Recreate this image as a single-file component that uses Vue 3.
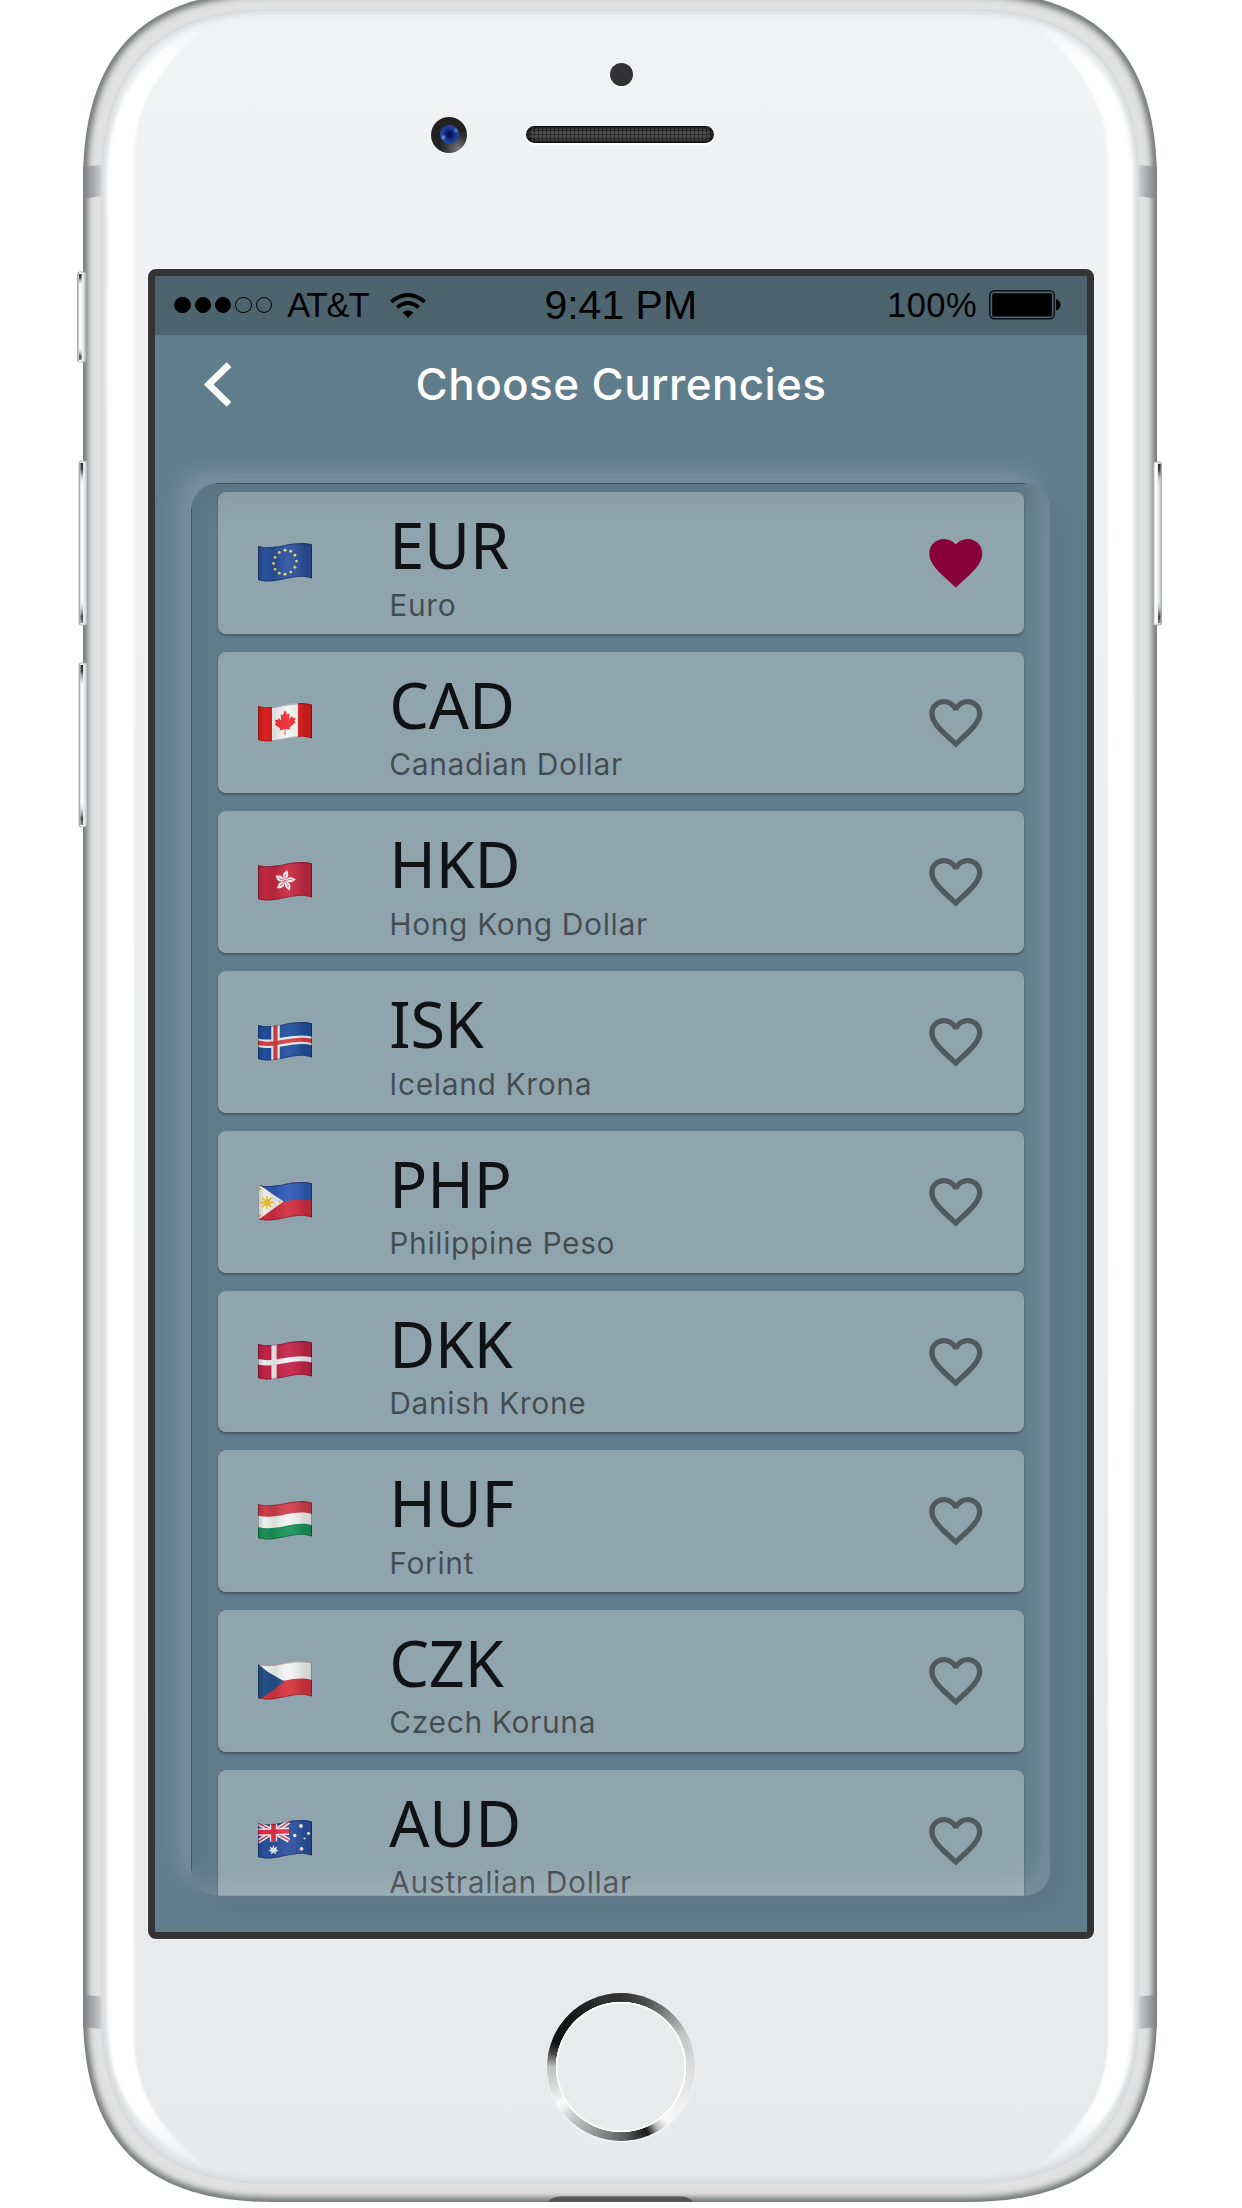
<script setup>
const currencies = [
  { code: 'EUR', name: 'Euro', favorite: true },
  { code: 'CAD', name: 'Canadian Dollar' },
  { code: 'HKD', name: 'Hong Kong Dollar' },
  { code: 'ISK', name: 'Iceland Krona' },
  { code: 'PHP', name: 'Philippine Peso' },
  { code: 'DKK', name: 'Danish Krone' },
  { code: 'HUF', name: 'Forint' },
  { code: 'CZK', name: 'Czech Koruna' },
  { code: 'AUD', name: 'Australian Dollar' },
]

// Rounded body outline with continuous-curvature corners.
function outline(x0, y0, x1, y1, r, c) {
  return `M${x0} ${y0 + r}C${x0} ${y0 + c} ${x0 + c} ${y0} ${x0 + r} ${y0}H${x1 - r}` +
    `C${x1 - c} ${y0} ${x1} ${y0 + c} ${x1} ${y0 + r}V${y1 - r}` +
    `C${x1} ${y1 - c} ${x1 - c} ${y1} ${x1 - r} ${y1}H${x0 + r}` +
    `C${x0 + c} ${y1} ${x0} ${y1 - c} ${x0} ${y1 - r}Z`
}
const body = outline(83, -9, 1157, 2202, 190, 61)
const face = outline(101, 9, 1139, 2184, 172, 57)

const buttons = [
  { x: 77.5, y: 272, h: 90, dark: 79 },
  { x: 79, y: 461, h: 164, dark: 80.5 },
  { x: 79, y: 663, h: 164, dark: 80.5 },
  { x: 1153, y: 462, h: 163, dark: 1158 },
]

const flagShape = 'M0 3C9 5.5 17 4 27 2S45-.8 54 1.6V35.4C45 32.5 37 33.6 27 36S8 39.6 0 37Z'
const euStars = Array.from({ length: 12 }, (_, i) => {
  const a = (i * Math.PI) / 6
  return { x: 27 + 11.5 * Math.sin(a), y: 19.3 - 12 * Math.cos(a) - 1.2 * Math.sin(a) }
})
const petals = [0, 72, 144, 216, 288]
const rays = [0, 45, 90, 135]
</script>

<template>
  <div class="stage">
    <svg class="phone" viewBox="0 0 1242 2208" width="1242" height="2208">
      <defs>
        <clipPath id="bodyClip"><path :d="body" /></clipPath>
        <clipPath id="faceClip"><path :d="face" /></clipPath>
        <linearGradient id="faceFill" x1="0" y1="0" x2="0" y2="1">
          <stop offset="0" stop-color="#f1f2f4" />
          <stop offset="1" stop-color="#e8e9eb" />
        </linearGradient>
        <linearGradient id="bandL">
          <stop offset="0" stop-color="#7b7e82" />
          <stop offset="1" stop-color="#cccdce" />
        </linearGradient>
        <linearGradient id="bandR">
          <stop offset="0" stop-color="#cccdce" />
          <stop offset="1" stop-color="#7b7e82" />
        </linearGradient>
        <linearGradient id="btnFill">
          <stop offset="0" stop-color="#9a9b9d" />
          <stop offset=".25" stop-color="#fff" />
          <stop offset=".5" stop-color="#f4f5f7" />
          <stop offset=".75" stop-color="#dcdde0" />
          <stop offset="1" stop-color="#b2b3b5" />
        </linearGradient>
        <linearGradient id="capFill" x1="0" y1="0" x2="0" y2="1">
          <stop offset="0" stop-color="#2c2c2c" />
          <stop offset=".04" stop-color="#444" />
          <stop offset=".14" stop-color="#fff" stop-opacity="0" />
          <stop offset=".85" stop-color="#fff" stop-opacity="0" />
          <stop offset=".96" stop-color="#444" />
          <stop offset="1" stop-color="#888" />
        </linearGradient>
        <linearGradient id="glowTop" gradientUnits="userSpaceOnUse" x1="0" y1="18" x2="0" y2="70">
          <stop offset="0" stop-color="#fff" stop-opacity=".1" />
          <stop offset="1" stop-color="#fff" />
        </linearGradient>
        <linearGradient id="glowBottom" gradientUnits="userSpaceOnUse" x1="0" y1="2110" x2="0" y2="2160">
          <stop offset="0" stop-color="#fff" />
          <stop offset="1" stop-color="#fff" stop-opacity=".3" />
        </linearGradient>
        <filter id="soft1" x="-5%" y="-5%" width="110%" height="110%"><feGaussianBlur stdDeviation="1" /></filter>
        <filter id="soft3" x="-5%" y="-5%" width="110%" height="110%"><feGaussianBlur stdDeviation="3.2" /></filter>
      </defs>

      <g clip-path="url(#bodyClip)">
        <path :d="body" fill="#e1e1e1" />
        <path :d="body" fill="none" stroke="#6b6e6d" stroke-width="9" filter="url(#soft3)" />
        <path d="M83 167L101 165V196L83 199Z" fill="url(#bandL)" />
        <path d="M1139 165L1157 167V199L1139 196Z" fill="url(#bandR)" />
        <path d="M83 1995L101 1996.5V2029L83 2027Z" fill="url(#bandL)" />
        <path d="M1139 1996.5L1157 1995V2027L1139 2029Z" fill="url(#bandR)" />
        <path d="M547 2203C551 2198 555 2196.500 562 2196.500H680C687 2196.500 690 2198 694 2203Z" fill="#555" />
      </g>
      <g clip-path="url(#faceClip)">
        <path :d="face" fill="url(#faceFill)" />
        <g filter="url(#soft1)">
          <path d="M107 1100V175C107 105 142 50 215 16C165 62 134 100 134 160V1100Z" fill="url(#glowTop)" />
          <path d="M107 1099V2025C107 2090 142 2140 205 2168C165 2130 134 2100 134 2035V1099Z" fill="url(#glowBottom)" />
          <path d="M1135 1100V175C1135 105 1100 50 1027 16C1077 62 1108 100 1108 160V1100Z" fill="url(#glowTop)" />
          <path d="M1135 1099V2025C1135 2090 1100 2140 1037 2168C1077 2130 1108 2100 1108 2035V1099Z" fill="url(#glowBottom)" />
        </g>
        <path :d="face" fill="none" stroke="#d6d8db" stroke-width="8" filter="url(#soft3)" />
        <path :d="face" fill="none" stroke="#d6d8da" stroke-width="2" />
      </g>

      <g v-for="(b, i) in buttons" :key="i">
        <rect :x="b.x" :y="b.y" width="8.500" :height="b.h" rx="2" fill="url(#btnFill)" stroke="#a4a5a7" stroke-width=".8" />
        <rect :x="b.dark" :y="b.y + 2" width="2.600" :height="b.h - 4" fill="url(#capFill)" />
      </g>
    </svg>

    <header class="top-glass">
      <span class="sensor"></span>
      <div class="ear">
        <span class="camera"><span class="lens"></span></span>
        <span class="speaker"></span>
      </div>
    </header>

    <main class="screen">
      <div class="status">
        <div class="carrier">
          <i class="dot on"></i><i class="dot on"></i><i class="dot on"></i><i class="dot"></i><i class="dot"></i>
          <span class="net">AT&amp;T</span>
          <svg class="wifi" viewBox="0 0 36 25" width="36" height="25">
            <g fill="none" stroke="#000" stroke-width="3.900">
              <path d="M1.400 8.800Q18-4.800 34.600 8.800" />
              <path d="M7.300 14.400Q18 5.800 28.700 14.400" />
            </g>
            <path d="M12.500 19.400Q18 15.400 23.500 19.400L18 25Z" />
          </svg>
        </div>
        <span class="time">9:41 PM</span>
        <div class="power">
          <span class="pct">100%</span>
          <svg viewBox="0 0 72 30" width="72" height="30">
            <rect x=".8" y=".8" width="64.500" height="28" rx="4.500" fill="none" stroke="#0b1216" stroke-width="1.500" />
            <rect x="3.200" y="3.200" width="59.700" height="23.200" rx="1.500" />
            <path d="M67 9Q71.500 10.500 71.500 14.800T67 20.600Z" />
          </svg>
        </div>
      </div>

      <div class="appbar">
        <svg class="back" viewBox="0 0 28 45" width="28" height="45">
          <path d="M25 2.600L4.600 22.500L25 42.400" fill="none" stroke="#fff" stroke-width="6.800" />
        </svg>
        <h1>Choose Currencies</h1>
      </div>

      <section class="panel">
        <ul class="list">
          <li v-for="c in currencies" :key="c.code" class="card">
            <svg class="flag" viewBox="0 0 54 39" width="54" height="39">
              <defs>
                <clipPath :id="'wave' + c.code"><path :d="flagShape" /></clipPath>
                <linearGradient :id="'sheen' + c.code">
                  <stop offset="0" stop-opacity=".2" />
                  <stop offset=".12" stop-opacity=".02" />
                  <stop offset=".3" stop-opacity=".1" />
                  <stop offset=".55" stop-color="#fff" stop-opacity=".06" />
                  <stop offset=".85" stop-opacity=".12" />
                  <stop offset=".97" stop-opacity=".14" />
                  <stop offset="1" stop-opacity=".35" />
                </linearGradient>
              </defs>
              <g :clip-path="`url(#wave${c.code})`">
                <template v-if="c.code === 'EUR'">
                  <rect width="54" height="40" fill="#2c539f" />
                  <circle v-for="(s, i) in euStars" :key="i" :cx="s.x" :cy="s.y" r="1.450" fill="#ecd257" />
                </template>
                <template v-else-if="c.code === 'CAD'">
                  <rect width="54" height="40" fill="#f3f4f4" />
                  <rect width="14" height="40" fill="#e02020" />
                  <rect x="40" width="14" height="40" fill="#e02020" />
                  <path d="M27 7L29.300 11.500L31.600 10.200L31 16L34 13L34.800 15L37.500 14.400L36.500 18L37.500 19.300L31.500 24.500L32 26.500L27.400 26V32H26.600V26.300L21.500 27.500L22.300 25.500L16.800 21.500L18 20.300L17 16.800L19.800 17L20.500 15L23.300 17.600L22.500 11.600L24.800 12Z" fill="#ef2f34" />
                </template>
                <template v-else-if="c.code === 'HKD'">
                  <rect width="54" height="40" fill="#c62a41" />
                  <g transform="translate(27 18.800)">
                    <g v-for="p in petals" :key="p" :transform="`rotate(${p + 8})`">
                      <path d="M0-.5C-3.600-3-4-8 1.200-11C.4-8.500 3.800-7.500 2-3.800C1.600-2.300 .6-2 0-.5Z" fill="#f6eef0" />
                      <path d="M0-2Q-1.500-5 .3-7" fill="none" stroke="#c62a41" stroke-width=".7" />
                    </g>
                  </g>
                </template>
                <template v-else-if="c.code === 'ISK'">
                  <rect width="54" height="40" fill="#22509f" />
                  <g fill="none" stroke="#eef0f2" stroke-width="8.500">
                    <path d="M17.500 0V40M-1 20.500C9 23 17 21.500 27 19.500S45 16.700 55 19" />
                  </g>
                  <g fill="none" stroke="#d94048" stroke-width="4.200">
                    <path d="M17.500 0V40M-1 20.500C9 23 17 21.500 27 19.500S45 16.700 55 19" />
                  </g>
                </template>
                <template v-else-if="c.code === 'PHP'">
                  <rect width="54" height="40" fill="#d22f42" />
                  <path d="M0 0H54V18.500C45 16 36 17.500 27 19.500S9 22.500 0 20.500Z" fill="#2f5cb8" />
                  <path d="M0 2L25.500 19.500L0 38Z" fill="#f3f3ef" />
                  <circle cx="8.800" cy="20.500" r="3.600" fill="#eec230" />
                  <path v-for="r in rays" :key="r" d="M8.800 14V27" :transform="`rotate(${r} 8.800 20.500)`" stroke="#eec230" stroke-width="1.500" />
                  <g fill="#eec230">
                    <circle cx="2" cy="7" r="1.200" /><circle cx="2" cy="33.500" r="1.200" /><circle cx="21.500" cy="19.800" r="1.200" />
                  </g>
                </template>
                <template v-else-if="c.code === 'DKK'">
                  <rect width="54" height="40" fill="#c52549" />
                  <path d="M16 0V40M-1 20.500C9 23 17 21.500 27 19.500S45 16.700 55 19" fill="none" stroke="#f3f3f4" stroke-width="5.200" />
                </template>
                <template v-else-if="c.code === 'HUF'">
                  <rect width="54" height="40" fill="#1c945a" />
                  <path d="M0 0H54V24.300C45 21.500 36 23 27 25S9 28.500 0 26Z" fill="#f3f4f4" />
                  <path d="M0 0H54V13C45 10.300 36 11.500 27 13.500S9 17 0 14.500Z" fill="#d23f4e" />
                </template>
                <template v-else-if="c.code === 'CZK'">
                  <rect width="54" height="40" fill="#d8343e" />
                  <path d="M0 0H54V19C45 16.200 36 17.500 27 19.500L0 22Z" fill="#f3f4f4" />
                  <path d="M0 3L10 11L26.500 20.500L10 33L0 39Z" fill="#265289" />
                </template>
                <template v-else>
                  <rect width="54" height="40" fill="#2c52a0" />
                  <g transform="skewY(-2)">
                    <path d="M0 3L31 21.500M0 21.500L31 3" stroke="#f1eef2" stroke-width="4.600" />
                    <path d="M0 3L31 21.500M0 21.500L31 3" stroke="#e0364e" stroke-width="1.500" />
                    <path d="M15.500 0V22M0 12.300H31" stroke="#f1eef2" stroke-width="7.400" />
                    <path d="M15.500 0V22M0 12.300H31" stroke="#e8304b" stroke-width="4.600" />
                  </g>
                  <g fill="#f3f4f8">
                    <path d="M15.500 24.800L16.600 27.900L19.500 26.400L18.300 29.300L20.600 31L17.700 31.500L17.800 34.500L15.500 32.500L13.200 34.500L13.300 31.500L10.400 31L12.700 29.300L11.500 26.400L14.400 27.900Z" />
                    <circle cx="43" cy="6" r="1.900" /><circle cx="36.800" cy="15.500" r="1.700" />
                    <circle cx="50.500" cy="13.300" r="1.600" /><circle cx="46.500" cy="18.500" r="1.100" /><circle cx="43.500" cy="28.800" r="1.900" />
                  </g>
                </template>
                <rect width="54" height="40" :fill="`url(#sheen${c.code})`" />
                <path :d="flagShape" fill="none" stroke="#000" stroke-opacity=".25" stroke-width="1.800" />
              </g>
            </svg>
            <div class="label">
              <div class="code">{{ c.code }}</div>
              <div class="name">{{ c.name }}</div>
            </div>
            <svg class="heart" :class="{ on: c.favorite }" viewBox="0 0 24 24" width="63.600" height="63.600">
              <path v-if="c.favorite" d="M12 21.350l-1.450-1.320C5.400 15.360 2 12.280 2 8.500 2 5.420 4.420 3 7.500 3c1.740 0 3.410.81 4.500 2.090C13.090 3.810 14.760 3 16.500 3 19.580 3 22 5.420 22 8.500c0 3.780-3.400 6.860-8.550 11.540L12 21.350z" />
              <path v-else d="M16.500 3c-1.740 0-3.410.81-4.500 2.090C10.910 3.810 9.240 3 7.500 3 4.420 3 2 5.420 2 8.500c0 3.780 3.400 6.860 8.550 11.540L12 21.350l1.450-1.320C18.600 15.360 22 12.280 22 8.500 22 5.420 19.580 3 16.500 3zm-4.400 15.550l-.1.100-.1-.1C7.140 14.240 4 11.390 4 8.500 4 6.500 5.500 5 7.500 5c1.540 0 3.040.99 3.570 2.360h1.870C13.460 5.990 14.960 5 16.500 5c2 0 3.500 1.500 3.500 3.500 0 2.890-3.140 5.740-7.900 10.050z" />
            </svg>
          </li>
        </ul>
      </section>
    </main>

    <footer class="chin">
      <span class="home"></span>
    </footer>
  </div>
</template>

<style>
body {
  background: #fff;
}
</style>

<style scoped>
.stage {
  position: relative;
  box-sizing: border-box;
  width: 1242px;
  height: 2208px;
  overflow: hidden;
  display: flex;
  flex-direction: column;
  align-items: center;
  font-family: Inter, sans-serif;
}
.phone {
  position: absolute;
  inset: 0;
}
.top-glass {
  position: relative;
  width: 946px;
  height: 268.5px;
  flex: none;
  display: flex;
  flex-direction: column;
  align-items: center;
}
.sensor {
  margin-top: 63px;
  width: 23px;
  height: 23px;
  border-radius: 50%;
  background: #323234;
  box-shadow: 0 1px 1px #fff;
}
.ear {
  align-self: stretch;
  display: flex;
  align-items: center;
  gap: 58.5px;
  margin-top: 30.5px;
  padding-left: 283px;
}
.camera {
  width: 36px;
  height: 36px;
  border-radius: 50%;
  background: radial-gradient(circle at 75% 88%, #777 0, #3a3a3a 28%, #222 45%);
  display: flex;
  align-items: center;
  justify-content: center;
  box-shadow: 0 1px 1px #fff;
}
.lens {
  width: 19px;
  height: 19px;
  border-radius: 50%;
  background:
    radial-gradient(circle at 18% 65%, #7ba0dc 0, transparent 16%),
    radial-gradient(circle at 85% 28%, #4d86d8 0, transparent 15%),
    radial-gradient(circle, #04104d 10%, #17308a 40%, #2c4eaa 75%);
}
.speaker {
  width: 188px;
  height: 16.5px;
  border-radius: 9px;
  background:
    repeating-linear-gradient(90deg, rgba(0, 0, 0, .35) 0 1.5px, transparent 1.5px 4px),
    repeating-linear-gradient(0deg, #303030 0 1.5px, #505050 1.5px 4px);
  box-shadow: inset 0 0 4px 2px #0a0a0a, 0 2px 1px #fff;
}
.screen {
  position: relative;
  box-sizing: border-box;
  flex: none;
  width: 946.5px;
  height: 1670.5px;
  border: 7px solid #343434;
  border-radius: 8px;
  background: #607d8b;
  display: flex;
  flex-direction: column;
  overflow: hidden;
  box-shadow: 0 0 0 1px #fff8;
}
.status {
  box-sizing: border-box;
  height: 59px;
  flex: none;
  display: grid;
  grid-template-columns: 1fr auto 1fr;
  align-items: center;
  padding: 0 26px 0 19.5px;
  background: #4d636e;
  color: #000;
  font-family: "Liberation Sans", Arial, sans-serif;
}
.carrier,
.power {
  display: flex;
  align-items: center;
}
.power {
  justify-content: flex-end;
}
.dot {
  box-sizing: border-box;
  width: 16.400px;
  height: 16.400px;
  margin-right: 4px;
  border: 1px solid #000;
  border-radius: 50%;
}
.dot.on {
  background: #000;
}
.net {
  margin-left: 11px;
  font-size: 34.500px;
  letter-spacing: -1.1px;
}
.wifi {
  margin-left: 21.500px;
}
.time {
  margin-left: 6px;
  font-size: 41px;
}
.pct {
  margin-right: 12px;
  font-size: 34.500px;
  letter-spacing: .5px;
}
.appbar {
  height: 148.500px;
  flex: none;
  display: grid;
  grid-template-columns: 77px 1fr 77px;
}
.back {
  margin: 27px 0 0 49.500px;
}
h1 {
  margin: 21px 0 0;
  height: 56px;
  line-height: 56px;
  text-align: center;
  color: #fff;
  font-size: 44px;
  font-weight: 500;
  letter-spacing: .4px;
}
.panel {
  position: relative;
  box-sizing: border-box;
  flex: none;
  width: 860px;
  height: 1412.500px;
  margin-left: 36px;
  border-radius: 27px;
  box-shadow: -12px -12px 24px rgba(255, 255, 255, .17), 12px 12px 26px rgba(0, 0, 0, .065);
}
.panel::after {
  content: "";
  position: absolute;
  inset: 0;
  border-radius: 27px;
  pointer-events: none;
  background:
    linear-gradient(#415862, #415862) 50% 0 / calc(100% - 50px) 1px no-repeat,
    linear-gradient(#415862, #415862) 0 50% / 1px calc(100% - 50px) no-repeat,
    linear-gradient(#516a76, #516a76) 100% 50% / 1px calc(100% - 50px) no-repeat,
    linear-gradient(#8496a0, #8496a0) 50% 100% / calc(100% - 54px) 1px no-repeat;
  box-shadow: inset 12px 12px 26px rgba(0, 0, 0, .065), inset -12px -12px 26px rgba(255, 255, 255, .14);
}
.list {
  height: 100%;
  box-sizing: border-box;
  margin: 0;
  padding: 9px 26.500px 0 27px;
  list-style: none;
  overflow: hidden;
}
.card {
  box-sizing: border-box;
  height: 141.700px;
  margin-bottom: 18.020px;
  padding: 0 36.200px 0 40px;
  display: flex;
  align-items: center;
  border-radius: 8px;
  background: #90a4ae;
  box-shadow: 0 1.500px 2.500px rgba(0, 0, 0, .28);
}
.flag {
  flex: none;
  margin-bottom: 1px;
}
.label {
  flex: 1;
  align-self: flex-start;
  padding: 21px 0 0 77.500px;
}
.code {
  height: 64px;
  line-height: 64px;
  font-family: "Noto Sans", sans-serif;
  font-size: 63px;
  letter-spacing: -.2px;
  color: rgba(0, 0, 0, .89);
}
.name {
  margin-top: 7.500px;
  height: 40px;
  line-height: 40px;
  font-size: 30px;
  letter-spacing: .62px;
  color: rgba(0, 0, 0, .54);
}
.heart {
  flex: none;
  fill: rgba(0, 0, 0, .45);
}
.heart.on {
  fill: #870039;
}
.chin {
  position: relative;
  flex: 1;
  padding-top: 54px;
}
.home {
  display: block;
  width: 148px;
  height: 148px;
  border-radius: 50%;
  background:
    radial-gradient(circle, #e9eaec 0 63px, #fff 64px 65px, transparent 65.500px),
    conic-gradient(#333 0deg, #4a4a4a 20deg, #888 42deg, #c4c5c6 62deg, #dcdcdd 90deg, #f0f0f0 125deg, #fafafa 140deg, #c0c0c0 149deg, #1a1a1b 158deg, #333 166deg, #606162 178deg, #909192 200deg, #c3c4c4 222deg, #fbfbfb 239deg, #dadbdb 252deg, #c0c0c0 270deg, #4a4a4b 281deg, #121214 290deg, #151618 315deg, #333 345deg, #333 360deg);
  box-shadow: 0 1px 2px #fff;
}
</style>
